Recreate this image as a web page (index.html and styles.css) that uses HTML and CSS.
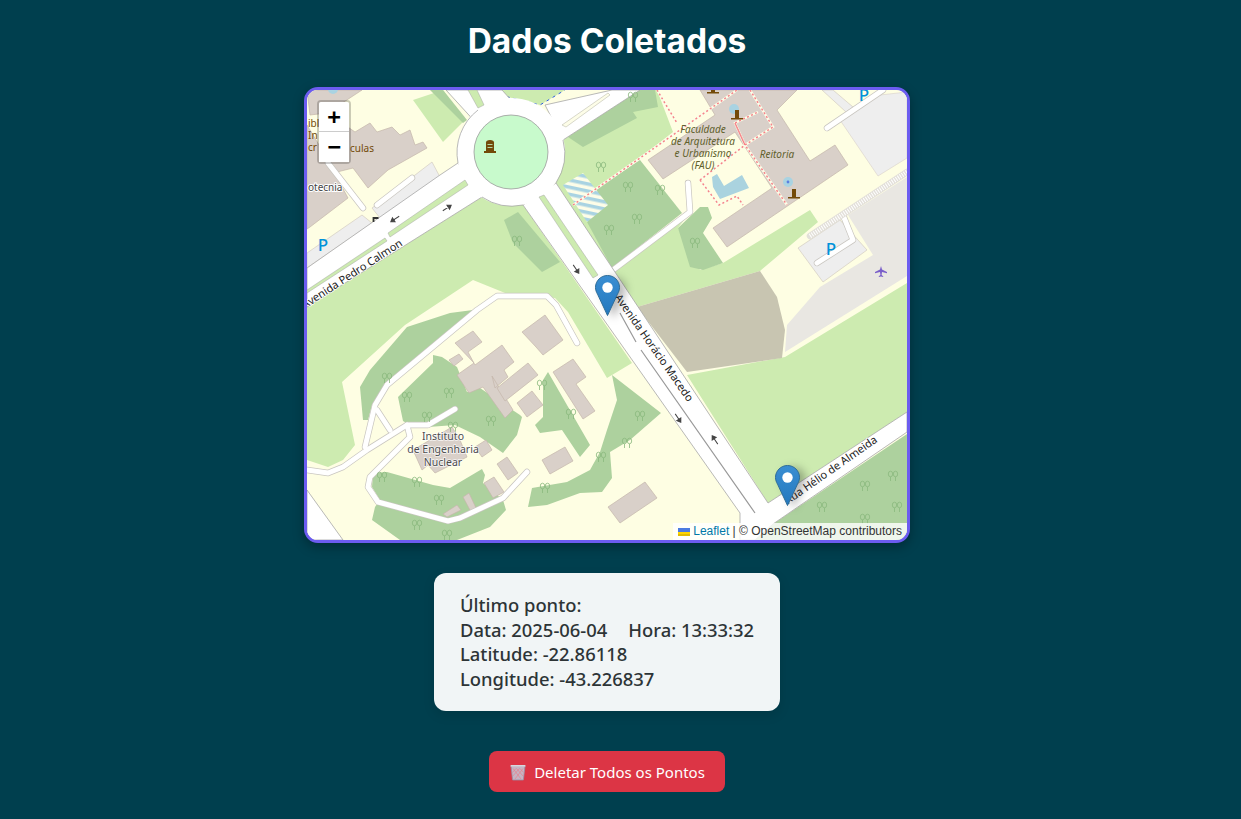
FILE: index.html
```html
<!DOCTYPE html>
<html lang="pt-BR">
<head>
<meta charset="utf-8">
<title>Dados Coletados</title>
<link rel="stylesheet" href="styles.css">
</head>
<body>
<main class="page">
  <h1 class="title">Dados Coletados</h1>
  <section class="map">
    <svg class="tiles" viewBox="307 90 600 450" width="600" height="450">
      <defs>
        <pattern id="hatch" width="7" height="7" patternUnits="userSpaceOnUse" patternTransform="rotate(12)">
          <rect width="7" height="7" fill="#fdfde8"/>
          <rect width="7" height="3.5" fill="#a9d3e2"/>
        </pattern>
        <g id="tree" fill="none" stroke="#8ab97e" stroke-width=".8">
          <ellipse cx="-2.5" cy="-2" rx="2.2" ry="2.8"/><path d="M-2.5 .8V5"/>
          <ellipse cx="2.5" cy="-2" rx="2.2" ry="2.8"/><path d="M2.5 .8V5"/>
        </g>
        <path id="arrow" d="M-5 0H4M1.5 -2.4L5 0L1.5 2.4z" fill="#444" stroke="#444" stroke-width="1"/>
        <g id="monument" fill="#734a08">
          <path d="M-2 -8h4v8h-4z"/><path d="M-6 0h12v1.4h-12z"/>
        </g>
      </defs>

      <rect x="307" y="90" width="600" height="450" fill="#fefee3"/>

      <!-- grass -->
      <g fill="#cdebb0">
        <polygon points="307,307 482,197 523,205 632,363 607,378 568,312 555,298 510,295 473,280 405,325 342,382 355,445 343,460 328,467 307,460"/>
        <polygon points="413,100 443,90 465,120 443,142"/>
        <polygon points="495,90 500,95 540,105 565,90"/>
        <polygon points="556,183 563,140 640,90 657,90 673,132 640,158 600,185 612,268 600,250"/>
        <polygon points="613,270 690,212 678,228 700,270 723,263 810,210 818,222 760,271 637,307 628,300"/>
        <polygon points="907,283 785,357 687,375 768,503 907,412"/>
      </g>

      <!-- forest -->
      <g fill="#add19e">
        <polygon points="430,90 443,90 467,120 463,123"/>
        <polygon points="504,220 518,212 560,262 542,272 513,243"/>
        <polygon points="568,137 640,90 655,90 658,107 633,112 637,118 583,147"/>
        <polygon points="585,196 640,160 682,213 612,268 587,222"/>
        <polygon points="678,228 700,207 708,207 712,218 703,233 723,263 703,270 690,267"/>
        <polygon points="363,420 360,387 370,370 407,327 450,313 473,310 385,385 372,405 368,420"/>
        <polygon points="398,397 433,363 433,355 442,357 457,367 467,392 480,388 520,415 522,417 517,435 503,453 480,437 455,425 415,428 403,421"/>
        <polygon points="543,380 548,372 590,445 580,457 562,430 540,433 535,425 543,417"/>
        <polygon points="612,375 661,413 630,440 610,452 612,478 602,492 580,493 547,505 528,507 532,488 567,482 590,470 600,452 607,430 617,400"/>
        <polygon points="373,473 387,472 433,485 450,488 482,469 485,475 483,483 503,500 506,510 490,527 457,540 400,540 372,520 375,507 380,500 372,487"/>
        <polygon points="773,524 907,434 907,540 745,540"/>
      </g>

      <!-- bare ground, industrial, parkings -->
      <polygon points="637,307 760,271 777,297 785,330 782,358 687,372" fill="#c8c5b1"/>
      <polygon points="848,215 907,177 907,276 785,352 787,325 820,287 873,255" fill="#e9e7e2"/>
      <polygon points="840,120 880,95 907,92 907,158 878,176" fill="#eeeeee" stroke="#d9d0c9" stroke-width=".6"/>
      <g fill="#eeeeee" stroke="#cfc6bb" stroke-width=".6">
        <polygon points="798,248 840,220 867,250 823,282"/>
        <polygon points="372,208 432,162 440,177 380,218"/>
        <polygon points="307,253 362,215 372,223 307,268"/>
        <polygon points="822,90 833,90 853,107 846,112"/>
      </g>
      <polygon points="563,185 583,173 608,205 587,222" fill="url(#hatch)"/>
      <polygon points="712,177 717,174 724,186 742,175 749,188 720,199 713,187" fill="#aad3df"/>

      <!-- buildings -->
      <g fill="#d9d0c9" stroke="#c4b6ab" stroke-width=".7">
        <polygon points="648,160 715,115 700,90 797,90 777,110 810,161 835,145 848,165 727,247 713,228 772,188 735,132 663,179"/>
        <polygon points="307,90 362,90 327,113 310,115"/>
        <polygon points="370,123 377,132 392,127 400,135 410,130 415,145 423,142 427,148 388,170 368,188 353,168 337,172 327,158 318,148 345,125 355,132"/>
        <polygon points="307,125 322,150 348,198 310,227 307,229"/>
        <polygon points="522,332 545,315 563,340 543,355 536,347"/>
        <polygon points="455,343 473,331 482,342 468,352 475,365 502,345 514,362 504,370 508,377 495,388 492,376 513,410 505,418 483,387 469,393 457,375 474,363"/>
        <polygon points="497,388 528,363 538,375 505,401"/>
        <polygon points="517,403 532,391 543,405 527,417"/>
        <polygon points="553,372 573,359 586,377 576,384 595,411 583,419"/>
        <polygon points="449,360 459,354 463,359 454,366"/>
        <polygon points="413,450 452,427 460,440 467,457 435,473 428,465 422,470"/>
        <polygon points="475,447 486,440 492,450 482,457"/>
        <polygon points="497,464 507,457 518,473 508,480"/>
        <polygon points="484,483 494,477 504,492 493,498"/>
        <polygon points="463,497 469,493 477,510 471,512"/>
        <polygon points="443,514 457,505 461,510 447,517"/>
        <polygon points="542,460 565,447 573,461 550,474"/>
        <polygon points="608,507 645,482 657,498 620,523"/>
      </g>

      <!-- footways -->
      <g fill="none" stroke="#fdfde8" stroke-width="2.4">
        <path d="M573 205L737 90M657 90L677 123M750 90L773 127L745 145L735 123L758 112M735 123L745 145L787 205M700 180L745 145M700 180L719 205L737 196L743 205"/>
      </g>
      <g fill="none" stroke="#f5838a" stroke-width="1.5" stroke-dasharray="2 2.4">
        <path d="M573 205L737 90M657 90L677 123M750 90L773 127L745 145L735 123L758 112M735 123L745 145L787 205M700 180L745 145M700 180L719 205L737 196L743 205"/>
      </g>
      <path d="M495 90L500 95L540 105L565 90" fill="none" stroke="#2d5ce0" stroke-width="1" stroke-dasharray="3 4"/>

      <!-- service roads -->
      <g fill="none" stroke-linecap="round" stroke-linejoin="round">
        <g stroke="#c9c6c0" stroke-width="6.4">
          <path d="M307 470L328 473L343 467L367 450L407 425L428 425L455 409"/>
          <path d="M365 447L375 405L387 385L477 310L497 296L547 296L556 305L577 343"/>
          <path d="M377 410L390 430"/>
          <path d="M407 425L410 437L370 477L368 487L378 502L448 521L460 518L503 498L527 472"/>
          <path d="M688 183L690 212L613 270"/>
          <path d="M817 263L853 240L843 215"/>
          <path d="M827 128L883 90"/>
          <path d="M377 205L412 178"/>
          <path d="M328 163L363 208"/>
        </g>
        <g stroke="#fff" stroke-width="5">
          <path d="M307 470L328 473L343 467L367 450L407 425L428 425L455 409"/>
          <path d="M365 447L375 405L387 385L477 310L497 296L547 296L556 305L577 343"/>
          <path d="M377 410L390 430"/>
          <path d="M407 425L410 437L370 477L368 487L378 502L448 521L460 518L503 498L527 472"/>
          <path d="M688 183L690 212L613 270"/>
          <path d="M817 263L853 240L843 215"/>
          <path d="M827 128L883 90"/>
          <path d="M377 205L412 178"/>
          <path d="M328 163L363 208"/>
        </g>
      </g>
      <path d="M810 236L907 172" stroke="#e3e0da" stroke-width="6.5" stroke-linecap="round" fill="none"/>
      <path d="M810 236L907 172" stroke="#fff" stroke-width="4.6" stroke-dasharray="1 1.4" fill="none"/>

      <!-- main roads -->
      <g fill="#fff" stroke="#a7a7a7" stroke-width=".8">
        <polygon points="307,268 440,175 458,163 482,197 307,307"/>
        <polygon points="523,205 556,183 768,503 907,412 907,432 773,524 755,540 740,540 740,513"/>
        <polygon points="545,105 612,90 640,90 563,140"/>
        <polygon points="446,90 502,90 520,110 478,125"/>
        <polygon points="307,490 343,540 307,540"/>
      </g>
      <circle cx="511" cy="152" r="54" fill="#fff"/>
      <path d="M458 163A54 54 0 0 1 478 110M482 197A54 54 0 0 0 523 205M556 183A54 54 0 0 0 563 140" fill="none" stroke="#a7a7a7" stroke-width=".8"/>
      <circle cx="511" cy="152" r="37" fill="#c8facc" stroke="#9b9b9b" stroke-width=".8"/>
      <polygon points="465,180 468,185 390,237 388,233" fill="#cdebb0" stroke="#a7a7a7" stroke-width=".5"/>
      <polygon points="385,238 387,241 307,293 307,290" fill="#cdebb0" stroke="#a7a7a7" stroke-width=".5"/>
      <polygon points="539,197 544,195 598,275 593,278" fill="#cdebb0" stroke="#a7a7a7" stroke-width=".5"/>
      <polygon points="562,125 608,93 610,95 566,127" fill="#fdfde8" stroke="#b0b0a0" stroke-width=".5"/>
      <polygon points="468,90 477,90 484,105 478,108" fill="#cdebb0" stroke="#a7a7a7" stroke-width=".5"/>
      <path d="M620 313L636 342M641 350L755 513" stroke="#999" stroke-width="1.2" fill="none"/>

      <!-- trees -->
      <use href="#tree" x="601" y="167"/><use href="#tree" x="517" y="241"/><use href="#tree" x="633" y="97"/>
      <use href="#tree" x="628" y="187"/><use href="#tree" x="637" y="219"/><use href="#tree" x="609" y="230"/>
      <use href="#tree" x="695" y="243"/><use href="#tree" x="660" y="190"/><use href="#tree" x="387" y="378"/>
      <use href="#tree" x="407" y="397"/><use href="#tree" x="449" y="393"/><use href="#tree" x="427" y="417"/>
      <use href="#tree" x="491" y="421"/><use href="#tree" x="453" y="427"/><use href="#tree" x="382" y="477"/>
      <use href="#tree" x="417" y="482"/><use href="#tree" x="439" y="500"/><use href="#tree" x="417" y="525"/>
      <use href="#tree" x="447" y="535"/><use href="#tree" x="545" y="488"/><use href="#tree" x="571" y="414"/>
      <use href="#tree" x="601" y="457"/><use href="#tree" x="542" y="385"/><use href="#tree" x="640" y="416"/>
      <use href="#tree" x="627" y="443"/><use href="#tree" x="893" y="476"/><use href="#tree" x="865" y="486"/>
      <use href="#tree" x="897" y="507"/><use href="#tree" x="865" y="519"/><use href="#tree" x="822" y="507"/>

      <!-- arrows -->
      <use href="#arrow" transform="translate(395 219) rotate(147)"/>
      <use href="#arrow" transform="translate(447 208) rotate(-33)"/>
      <use href="#arrow" transform="translate(576 269) rotate(56)"/>
      <use href="#arrow" transform="translate(678 418) rotate(56)"/>
      <use href="#arrow" transform="translate(715 440) rotate(236)"/>
      <path d="M373.5 222v-5M373.5 218h5" fill="none" stroke="#333" stroke-width="1.8"/>

      <!-- point icons -->
      <path d="M486 151V142.5a4 2.5 0 0 1 8 0V151z" fill="#734a08"/>
      <path d="M484 151h12v2h-12z" fill="#734a08"/>
      <path d="M487.5 144.5h5M487.5 147.5h5" stroke="#c8facc" stroke-width=".8"/>
      <circle cx="734" cy="109" r="5" fill="#a9d3e2"/>
      <circle cx="788" cy="182" r="5" fill="#a9d3e2"/>
      <circle cx="788" cy="182" r="1.4" fill="#5b7fe0"/>
      <use href="#monument" x="737" y="118"/>
      <use href="#monument" x="794" y="197"/>
      <use href="#monument" x="713" y="92"/>
      <circle cx="333" cy="89" r="5" fill="#a9d3e2"/>
      <path d="M881 266l1 3.5 5 2.6v1.2l-5-1.2-.4 3 1.6 1.2v.8l-2.2-.6-2.2.6v-.8l1.6-1.2-.4-3-5 1.2v-1.2l5-2.6z" fill="#7a5fc9"/>

      <!-- text -->
      <g class="parking">
        <text x="323" y="251">P</text>
        <text x="831" y="255">P</text>
        <text x="864" y="101">P</text>
      </g>
      <g class="label-brown">
        <text x="308" y="127">ibl</text>
        <text x="308" y="139">In</text>
        <text x="308" y="151">cr</text>
        <text x="350" y="152">culas</text>
      </g>
      <text class="label-dark" x="308" y="191">otecnia</text>
      <g class="label-olive" text-anchor="middle">
        <text x="703" y="133">Faculdade</text>
        <text x="703" y="145">de Arquitetura</text>
        <text x="703" y="157">e Urbanismo</text>
        <text x="703" y="169">(FAU)</text>
        <text x="777" y="158">Reitoria</text>
      </g>
      <g class="label-inst" text-anchor="middle">
        <text x="443" y="440">Instituto</text>
        <text x="443" y="453">de Engenharia</text>
        <text x="443" y="466">Nuclear</text>
      </g>
      <g class="label-road" text-anchor="middle">
        <text transform="translate(354 277) rotate(-33)">Avenida Pedro Calmon</text>
        <text transform="translate(651 350) rotate(55)">Avenida Horácio Macedo</text>
        <text transform="translate(833 473) rotate(-35)">Rua Hélio de Almeida</text>
      </g>
    </svg>

    <div class="zoom">
      <a class="zoom-btn zoom-in">+</a>
      <a class="zoom-btn">−</a>
    </div>

    <svg class="pin pin-a" viewBox="0 0 25 41" width="25" height="41"><use href="#pin-shape"/></svg>
    <svg class="pin pin-b" viewBox="0 0 25 41" width="25" height="41">
      <defs>
        <linearGradient id="pin-fill" x1="0" y1="0" x2="0" y2="1">
          <stop offset="0" stop-color="#3a8ed2"/><stop offset="1" stop-color="#2478be"/>
        </linearGradient>
        <g id="pin-shape">
          <path d="M12.5 .5C5.9 .5 .5 5.8 .5 12.4c0 2.3 .7 4.6 2 6.7L12.5 40.5l10-21.4c1.3-2.1 2-4.4 2-6.7C24.5 5.8 19.1 .5 12.5 .5z" fill="url(#pin-fill)" stroke="#2e6c97"/>
          <circle cx="12.5" cy="12.5" r="5.2" fill="#fff"/>
        </g>
      </defs>
      <use href="#pin-shape"/>
    </svg>

    <div class="attribution"><svg class="flag" viewBox="0 0 12 8" width="12" height="8"><rect width="12" height="4" fill="#4c7be1"/><rect y="4" width="12" height="2" fill="#ffd500"/><rect y="6" width="12" height="2" fill="#e0bc00"/></svg> <a class="attr-link">Leaflet</a> | © OpenStreetMap contributors</div>
  </section>

  <section class="info">
    <div>Último ponto:</div>
    <div>Data: 2025-06-04<span class="hora">Hora: 13:33:32</span></div>
    <div>Latitude: -22.86118</div>
    <div>Longitude: -43.226837</div>
  </section>

  <button class="delete" type="button">
    <svg class="bin" viewBox="0 0 18 18" width="18" height="18">
      <path d="M2 3h14l-1.6 14H3.6z" fill="#c6b4c4" stroke="#9b8ea3" stroke-width=".8"/>
      <path d="M4 5.5L12 16M7.5 5.5L14 13M11 5.5L14.6 9.5M14 5.5L6 16M10.5 5.5L3.8 13M7 5.5L3.4 9.5" stroke="#e8818c" stroke-width=".7" fill="none"/>
      <path d="M1.6 2.8h14.8" stroke="#d8d8de" stroke-width="1.6"/>
    </svg>
    <span>Deletar Todos os Pontos</span>
  </button>
</main>
</body>
</html>
```
FILE: styles.css
```css
* { box-sizing: border-box; }

html, body {
  margin: 0;
  height: 100%;
  background: #003f4e;
}

.page {
  width: 1214px;
  display: flex;
  flex-direction: column;
  align-items: center;
  padding-top: 21px;
  font-family: "Noto Sans", sans-serif;
}

.title {
  margin: 0 0 26px;
  height: 40px;
  line-height: 40px;
  font-family: Inter, "Liberation Sans", sans-serif;
  font-size: 33.5px;
  font-weight: 700;
  color: #fff;
}

.map {
  position: relative;
  width: 606px;
  height: 456px;
  border: 3px solid #6c5cf0;
  border-radius: 14px;
  overflow: hidden;
  box-shadow: 0 4px 12px rgba(0, 0, 0, .3);
  background: #ddd;
}

.tiles { display: block; }

.parking text {
  font-family: "Noto Sans", sans-serif;
  font-size: 17px;
  font-weight: 500;
  fill: #0092da;
  text-anchor: middle;
}

.label-brown text {
  font-family: "Noto Sans", sans-serif;
  font-size: 10px;
  fill: #734a08;
}

.label-dark {
  font-family: "Noto Sans", sans-serif;
  font-size: 10px;
  fill: #444;
  paint-order: stroke;
  stroke: #fff;
  stroke-width: 2px;
}

.label-olive text {
  font-family: "Noto Sans", sans-serif;
  font-size: 10px;
  font-style: italic;
  fill: #5f5f2c;
}

.label-inst text {
  font-family: "Noto Sans", sans-serif;
  font-size: 10.5px;
  fill: #4d4d4d;
  paint-order: stroke;
  stroke: rgba(255, 255, 255, .8);
  stroke-width: 1.6px;
}

.label-road text {
  font-family: "Noto Sans", sans-serif;
  font-size: 11px;
  fill: #222;
  paint-order: stroke;
  stroke: #fff;
  stroke-width: 1.6px;
}

.zoom {
  position: absolute;
  top: 10px;
  left: 10px;
  display: flex;
  flex-direction: column;
  border: 2px solid rgba(0, 0, 0, .2);
  border-radius: 4px;
  background-clip: padding-box;
}

.zoom-btn {
  display: block;
  width: 30px;
  height: 30px;
  line-height: 30px;
  text-align: center;
  background: #fff;
  color: #000;
  font-family: "DejaVu Sans Mono", "Liberation Mono", monospace;
  font-size: 22px;
  font-weight: 700;
}

.zoom-in {
  border-bottom: 1px solid #ccc;
  border-radius: 2px 2px 0 0;
}

.pin {
  position: absolute;
  filter: drop-shadow(6px 2px 4px rgba(0, 0, 0, .28));
}

.pin-a { left: 288px; top: 185px; }
.pin-b { left: 468px; top: 375px; }

.attribution {
  position: absolute;
  right: 0;
  bottom: 0;
  height: 17px;
  padding: 0 5px;
  white-space: nowrap;
  background: rgba(255, 255, 255, .8);
  color: #333;
  font-family: "Liberation Sans", Arial, sans-serif;
  font-size: 12px;
  line-height: 17px;
}

.flag { vertical-align: -1px; }

.attr-link { color: #0078a8; }

.info {
  margin-top: 30px;
  width: 346px;
  padding: 20px 0 20px 26px;
  border-radius: 12px;
  background: #f1f5f6;
  box-shadow: 0 4px 12px rgba(0, 0, 0, .12);
  color: #2d3436;
  font-size: 18.4px;
  line-height: 24.5px;
  font-weight: 500;
  white-space: nowrap;
}

.hora { margin-left: 21px; }

.delete {
  margin-top: 40px;
  width: 236px;
  height: 41px;
  display: flex;
  align-items: center;
  justify-content: center;
  gap: 7px;
  border: 0;
  border-radius: 8px;
  background: #dc3545;
  color: #fff;
  font-family: "Noto Sans", sans-serif;
  font-size: 15px;
}

.bin { flex: none; }
```
